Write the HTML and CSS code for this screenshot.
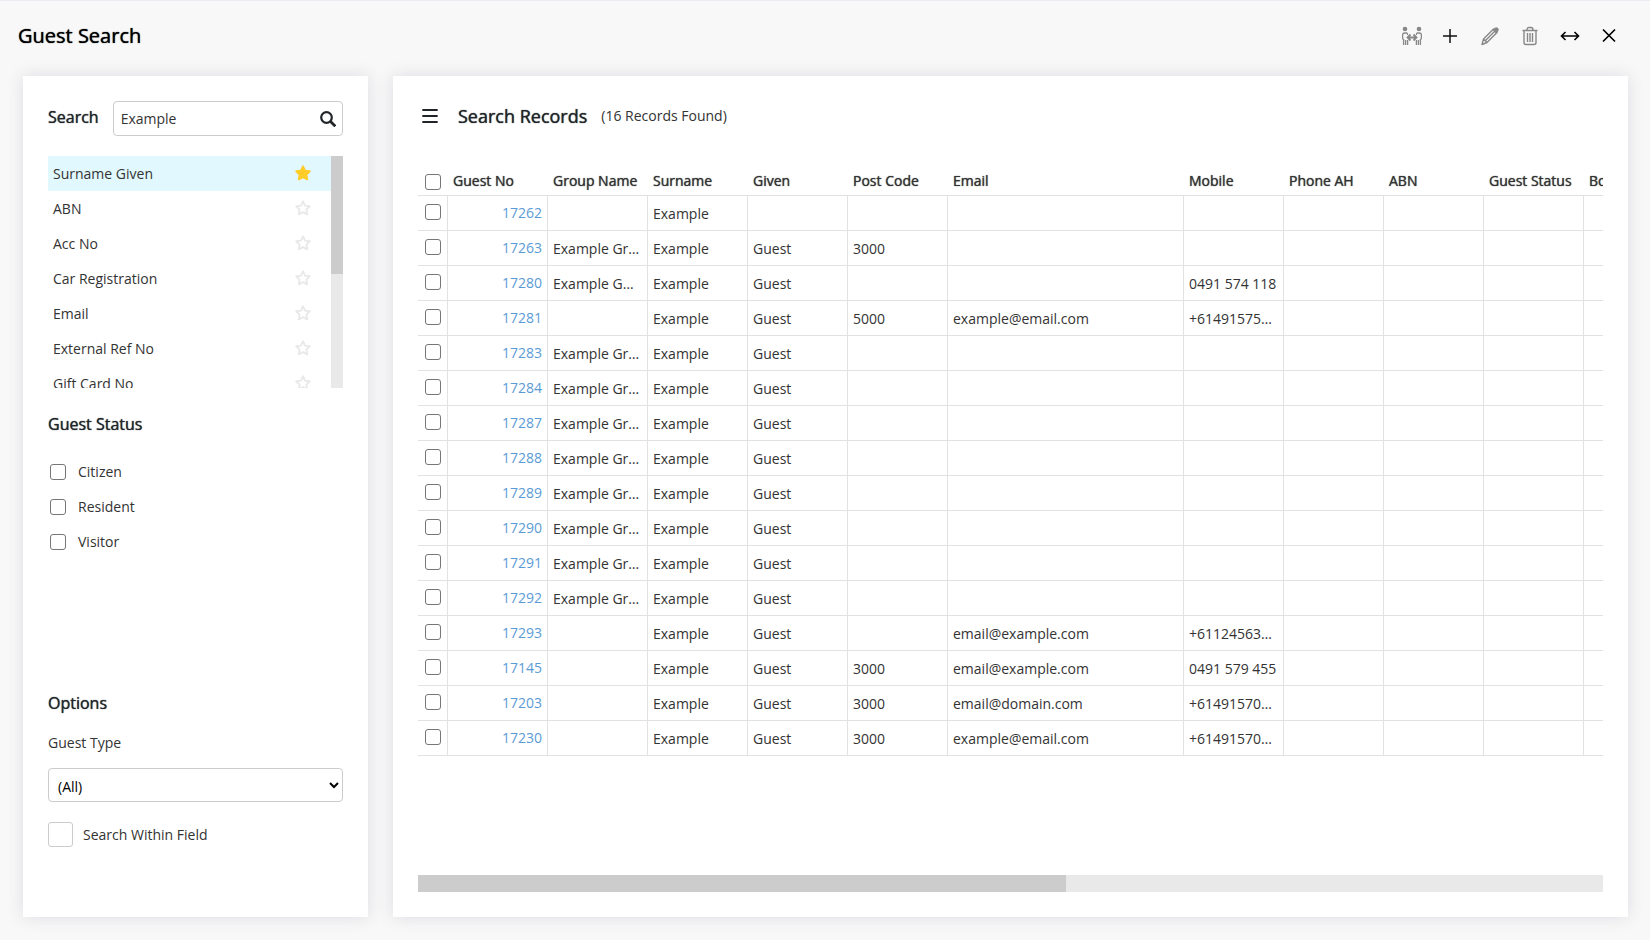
FILE: index.html
```
<!DOCTYPE html>
<html lang="en">
<head>
    <meta charset="UTF-8">
    <meta name="viewport" content="width=device-width, initial-scale=1.0">
    <title>Guest Search</title>
    <link rel="stylesheet" href="styles.css">
</head>
<body>
    <svg class="sprite" aria-hidden="true">
        <symbol id="star" viewBox="0 0 16 16">
            <path d="M8 1.3l2.1 4.3 4.7.7-3.4 3.3.8 4.7L8 12.1l-4.2 2.2.8-4.7L1.2 6.3l4.7-.7z" stroke-width="1.9" stroke-linejoin="round"/>
        </symbol>
    </svg>

    <header class="top">
        <h1>Guest Search</h1>
        <div class="actions">
            <button title="Merge">
                <svg width="20" height="20" viewBox="1 0 20 20">
                    <g fill="#888">
                        <circle cx="4" cy="3" r="2.3"/>
                        <circle cx="18" cy="3" r="2.3"/>
                    </g>
                    <g fill="none" stroke="#888" stroke-width="1.3">
                        <path d="M2.6 19v-5.500q-1-.5-1-2V9q0-2 2-2h2q1 0 1 2M4.600 19v-5M6.600 19v-5M19.400 19v-5.500q1-.5 1-2V9q0-2-2-2h-2q-1 0-1 2M17.400 19v-5M15.400 19v-5"/>
                        <path stroke-width="1.8" d="M6.500 11.500h9M9.500 8.500l-3 3 3 3M12.500 8.500l3 3-3 3"/>
                    </g>
                </svg>
            </button>
            <button title="Add">
                <svg width="16" height="20" viewBox="0 0 16 20"><path d="M8 3v14M1 10h14" fill="none" stroke="#111" stroke-width="1.5"/></svg>
            </button>
            <button title="Edit">
                <svg width="24" height="20" viewBox="-2 0 24 20">
                    <path d="M2 18.500l1.500-5.500L13.500 3 17 6.500 7 16.500zM3.500 13L7 16.500M5.500 14.500l9-9" fill="none" stroke="#888" stroke-width="1.4" stroke-linejoin="round"/>
                    <path d="M12.500 4l2-2q1.800-1.500 3.500 0t0 3.500l-2 2z" fill="#888"/>
                </svg>
            </button>
            <button title="Delete">
                <svg width="16" height="20" viewBox="0 0 16 20">
                    <path d="M.5 4.500h15M5 4q0-2.500 2-2.500h2q2 0 2 2.500M2 4.500v12q0 2 2 2h8q2 0 2-2v-12M5.500 7v9M8 7v9M10.500 7v9" fill="none" stroke="#888" stroke-width="1.4"/>
                </svg>
            </button>
            <button title="Expand">
                <svg width="24" height="20" viewBox="-2 0 24 20"><path d="M2 10h16M5.500 6l-4 4 4 4M14.500 6l4 4-4 4" fill="none" stroke="#000" stroke-width="1.6"/></svg>
            </button>
            <button title="Close">
                <svg width="14" height="20" viewBox="0 0 14 20"><path d="M1 3.500l12 12M13 3.500l-12 12" fill="none" stroke="#000" stroke-width="1.7"/></svg>
            </button>
        </div>
    </header>

    <main class="content">
        <aside class="panel filters">
            <div class="search-row">
                <label class="heading" for="search">Search</label>
                <div class="search-box">
                    <input type="text" id="search" value="Example">
                    <button title="Search">
                        <svg width="16" height="16" viewBox="0 0 16 16"><g fill="none" stroke="#212529"><circle cx="6.5" cy="6.5" r="5.3" stroke-width="2.2"/><path d="M10.300 10.300l5 5" stroke-width="2.7"/></g></svg>
                    </button>
                </div>
            </div>

            <div class="fields">
                <ul id="fields"></ul>
                <div class="scroll-y"><div class="thumb"></div></div>
            </div>

            <h2 class="heading">Guest Status</h2>
            <div class="status">
                <label><input type="checkbox"> Citizen</label>
                <label><input type="checkbox"> Resident</label>
                <label><input type="checkbox"> Visitor</label>
            </div>

            <h2 class="heading">Options</h2>
            <label class="type-label" for="guestType">Guest Type</label>
            <select id="guestType">
                <option>(All)</option>
            </select>
            <label class="within"><input type="checkbox"> Search Within Field</label>
        </aside>

        <section class="panel records">
            <div class="records-title">
                <button title="Menu">
                    <svg width="16" height="14" viewBox="0 0 16 14"><path d="M1 1h14M1 7h14M1 13h14" stroke="#212529" stroke-width="1.8" stroke-linecap="round"/></svg>
                </button>
                <h2>Search Records</h2>
                <span>(16 Records Found)</span>
            </div>
            <div class="table-wrap">
                <table>
                    <colgroup>
                        <col class="col-check"><col><col><col><col><col><col class="col-email"><col><col><col><col><col>
                    </colgroup>
                    <thead>
                        <tr>
                            <th><input type="checkbox" aria-label="Select all"></th>
                            <th>Guest No</th>
                            <th>Group Name</th>
                            <th>Surname</th>
                            <th>Given</th>
                            <th>Post Code</th>
                            <th>Email</th>
                            <th>Mobile</th>
                            <th>Phone AH</th>
                            <th>ABN</th>
                            <th>Guest Status</th>
                            <th>Booking</th>
                        </tr>
                    </thead>
                    <tbody id="rows"></tbody>
                </table>
            </div>
            <div class="scroll-x"><div class="thumb"></div></div>
        </section>
    </main>

    <script src="script.js"></script>
</body>
</html>
```
FILE: styles.css
```
*{
    margin: 0;
    padding: 0;
    box-sizing: border-box;
}

body{
    background-color: #f8f8f8;
    border-top: 1px solid #ebebf1;
    min-height: 100vh;
    display: flex;
    flex-direction: column;
    font-family: "Open Sans", sans-serif;
    font-size: 14px;
    line-height: 20px;
    color: #333;
}

button{
    border: none;
    background: none;
    display: flex;
    cursor: pointer;
}

input, select{
    font-family: inherit;
    font-size: 14px;
}

.sprite{
    display: none;
}

.top{
    display: flex;
    justify-content: space-between;
    align-items: center;
    height: 75px;
    padding: 0 34px 5px 18px;
}

h1{
    font-size: 20px;
    font-weight: 400;
    color: #000;
    text-shadow: 0 0 1px #000;
}

.actions{
    display: flex;
    align-items: center;
    gap: 20px;
}

.content{
    flex: 1;
    display: flex;
    gap: 25px;
    padding: 0 22px 23px 23px;
}

.panel{
    background-color: #fff;
    box-shadow: 0 0 16px #dcdce2;
    padding: 25px;
}

.filters{
    width: 345px;
    flex-shrink: 0;
}

.heading{
    font-size: 16px;
    font-weight: 400;
    line-height: 24px;
    color: #212529;
    text-shadow: 0 0 1px #212529;
}

.search-row{
    display: flex;
    align-items: center;
    gap: 14px;
    margin-bottom: 20px;
}

.search-row .heading{
    padding-bottom: 3px;
}

.search-box{
    flex: 1;
    display: flex;
    align-items: center;
    height: 35px;
    padding: 0 6px 0 7px;
    border: 1px solid #ccc;
    border-radius: 4px;
}

.search-box input{
    flex: 1;
    min-width: 0;
    border: none;
    outline: none;
    color: #333;
    background: none;
}

.fields{
    display: flex;
    height: 232px;
    margin-bottom: 24px;
    overflow: hidden;
}

.fields ul{
    flex: 1;
    list-style: none;
}

.fields li{
    display: flex;
    justify-content: space-between;
    align-items: center;
    height: 35px;
    padding: 0 20px 0 5px;
}

.fields li.selected{
    background-color: #e1f8fe;
}

.star{
    width: 16px;
    height: 16px;
    margin-bottom: 1px;
    fill: none;
    stroke: #e9e9e9;
}

.selected .star{
    fill: #ffcc2a;
    stroke: #ffcc2a;
}

.scroll-y{
    width: 12px;
    background-color: #e9e9e9;
}

.scroll-y .thumb{
    height: 118px;
    background-color: #ccc;
}

.status{
    height: 255px;
    padding: 18px 0 0 2px;
}

.status label{
    display: flex;
    align-items: center;
    gap: 12px;
    height: 35px;
}

input[type="checkbox"]{
    appearance: none;
    flex-shrink: 0;
    width: 16px;
    height: 16px;
    border: 1px solid #767676;
    border-radius: 3px;
    background-color: #fff;
}

input[type="checkbox"]:checked{
    background-color: #5b9bd5;
}

.type-label{
    display: block;
    margin: 18px 0 15px;
}

select{
    width: 100%;
    height: 34px;
    padding: 2px 5px 0;
    border: 1px solid #ccc;
    border-radius: 4px;
    background-color: #fff;
    color: #000;
}

.within{
    display: flex;
    align-items: center;
    gap: 10px;
    margin-top: 20px;
}

.within input[type="checkbox"]{
    width: 25px;
    height: 25px;
    border-color: #ccc;
}

.records{
    flex: 1;
    min-width: 0;
    display: flex;
    flex-direction: column;
}

.records-title{
    display: flex;
    align-items: center;
    height: 30px;
    padding-left: 4px;
    margin-bottom: 30px;
}

.records-title h2{
    margin: 0 14px 0 20px;
    font-size: 18px;
    font-weight: 400;
    color: #212529;
    text-shadow: 0 0 1px #212529;
}

.table-wrap{
    flex: 1;
    overflow: hidden;
}

table{
    width: 1266px;
    table-layout: fixed;
    border-collapse: separate;
    border-spacing: 0;
}

col{
    width: 100px;
}

.col-check{
    width: 30px;
}

.col-email{
    width: 236px;
}

th, td{
    height: 35px;
    padding: 0 5px;
    text-align: left;
    font-weight: 400;
    white-space: nowrap;
    overflow: hidden;
    text-overflow: ellipsis;
    border-bottom: 1px solid #e2e2e2;
}

th{
    padding-top: 5px;
    text-shadow: 0 0 1px #333;
}

td{
    padding-top: 2px;
    border-right: 1px solid #e2e2e2;
}

td:nth-child(2){
    padding-top: 0;
    text-align: right;
}

td:first-child{
    padding: 0 6px 2px 7px;
}

th:first-child{
    padding: 7px 6px 0 7px;
}

td input, th input{
    display: block;
}

a{
    color: #5b9bd5;
    text-decoration: none;
}

.scroll-x{
    height: 17px;
    background-color: #e9e9e9;
}

.scroll-x .thumb{
    width: 54.7%;
    height: 17px;
    background-color: #ccc;
}
```
FILE: script.js
```
const fields = ['Surname Given', 'ABN', 'Acc No', 'Car Registration', 'Email', 'External Ref No', 'Gift Card No']

document.getElementById('fields').innerHTML = fields.map((name, i) => `
    <li class="${i === 0 ? 'selected' : ''}">${name}<svg class="star"><use href="#star"/></svg></li>`).join('')

// no, group, surname, given, post code, email, mobile
const guests = [
    ['17262', '', 'Example', '', '', '', ''],
    ['17263', 'Example Group', 'Example', 'Guest', '3000', '', ''],
    ['17280', 'Example GMBH', 'Example', 'Guest', '', '', '0491 574 118'],
    ['17281', '', 'Example', 'Guest', '5000', 'example@email.com', '+61491575789'],
    ['17283', 'Example Group', 'Example', 'Guest', '', '', ''],
    ['17284', 'Example Group', 'Example', 'Guest', '', '', ''],
    ['17287', 'Example Group', 'Example', 'Guest', '', '', ''],
    ['17288', 'Example Group', 'Example', 'Guest', '', '', ''],
    ['17289', 'Example Group', 'Example', 'Guest', '', '', ''],
    ['17290', 'Example Group', 'Example', 'Guest', '', '', ''],
    ['17291', 'Example Group', 'Example', 'Guest', '', '', ''],
    ['17292', 'Example Group', 'Example', 'Guest', '', '', ''],
    ['17293', '', 'Example', 'Guest', '', 'email@example.com', '+61124563789'],
    ['17145', '', 'Example', 'Guest', '3000', 'email@example.com', '0491 579 455'],
    ['17203', '', 'Example', 'Guest', '3000', 'email@domain.com', '+61491570156'],
    ['17230', '', 'Example', 'Guest', '3000', 'example@email.com', '+61491570157']
]

document.getElementById('rows').innerHTML = guests.map(([no, ...cells]) => `
    <tr>
        <td><input type="checkbox" aria-label="Select ${no}"></td>
        <td><a href="#">${no}</a></td>
        ${cells.map(c => `<td>${c}</td>`).join('')}
        <td></td><td></td><td></td><td></td>
    </tr>`).join('')
```
